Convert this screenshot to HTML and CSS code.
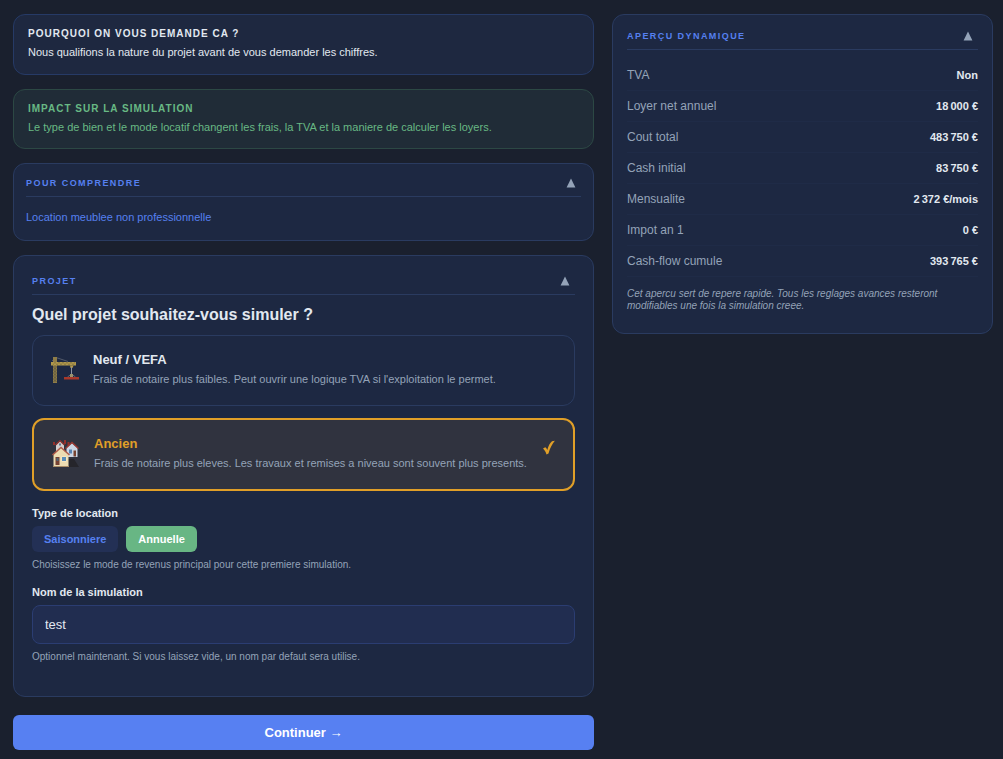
FILE: index.html
```html
<!DOCTYPE html>
<html lang="fr">
<head>
<meta charset="utf-8">
<meta name="viewport" content="width=device-width, initial-scale=1">
<title>Simulation</title>
<link rel="stylesheet" href="styles.css">
</head>
<body>
<div class="layout">
  <main class="main">
    <section class="info">
      <h2 class="info-title">POURQUOI ON VOUS DEMANDE CA ?</h2>
      <p class="info-text">Nous qualifions la nature du projet avant de vous demander les chiffres.</p>
    </section>
    <section class="info info-impact">
      <h2 class="info-title">IMPACT SUR LA SIMULATION</h2>
      <p class="info-text">Le type de bien et le mode locatif changent les frais, la TVA et la maniere de calculer les loyers.</p>
    </section>
    <section class="card card-help">
      <header class="card-head">
        <h2 class="card-title">POUR COMPRENDRE</h2>
        <button class="toggle" type="button" aria-label="Replier"><svg width="10" height="10" viewBox="0 0 10 10"><path d="M5 0.5 9.4 9.5H0.6z"/></svg></button>
      </header>
      <a class="help-link" href="#">Location meublee non professionnelle</a>
    </section>
    <section class="card card-project">
      <header class="card-head">
        <h2 class="card-title">PROJET</h2>
        <button class="toggle" type="button" aria-label="Replier"><svg width="10" height="10" viewBox="0 0 10 10"><path d="M5 0.5 9.4 9.5H0.6z"/></svg></button>
      </header>
      <h1 class="question">Quel projet souhaitez-vous simuler ?</h1>
      <div class="options">
        <button class="option" type="button" aria-pressed="false">
          <svg class="option-icon" width="28" height="28" viewBox="0 0 28 28">
            <path d="M1 5 5 1.500 17 5.500" fill="none" stroke="#5f6674" stroke-width=".8"/>
            <path d="M2 27V1h4v26z" fill="#8f7d48"/>
            <path d="M2.500 8 5.500 11 2.500 14 5.500 17 2.500 20 5.500 23 2.500 26M5.500 8 2.500 11 5.500 14 2.500 17 5.500 20 2.500 23 5.500 26" fill="none" stroke="#4a4638" stroke-width=".6"/>
            <path d="M0 6h25v3.500H0z" fill="#b0984c"/>
            <path d="m2 9 2-3 2 3 2-3 2 3 2-3 2 3 2-3 2 3 2-3 2 3 2-3" fill="none" stroke="#75663a" stroke-width=".5"/>
            <path d="M19 9.500h3.500L21.500 12h-2z" fill="#b59a45"/>
            <path d="M20.500 11v8" fill="none" stroke="#8d93a0" stroke-width="1"/>
            <path d="m20.500 18-4 3m4-3 4 3" fill="none" stroke="#7c7f86" stroke-width=".7"/>
            <path d="M19 18h3v3h-3z" fill="#9a946f"/>
            <path d="M13 21h15v2.500H13z" fill="#a9382a"/>
          </svg>
          <span class="option-body">
            <span class="option-name">Neuf / VEFA</span>
            <span class="option-desc">Frais de notaire plus faibles. Peut ouvrir une logique TVA si l'exploitation le permet.</span>
          </span>
        </button>
        <button class="option option-selected" type="button" aria-pressed="true">
          <svg class="option-icon" width="28" height="28" viewBox="0 0 28 28">
            <path d="M16 19h6l5 8H17z" fill="#25252b"/>
            <path d="M4 5 8 1l4 4v6H4z" fill="#d3cecd"/>
            <path d="M3.500 5 8 .8 12.500 5" fill="none" stroke="#8b3230" stroke-width="1.400"/>
            <path d="M1 2h2v3H1zM12 0h2v4h-2zM15.500 2h2v4h-2z" fill="#94302c"/>
            <path d="M7 3.500h2v2H7z" fill="#5f788f"/>
            <path d="M14.500 8 20 3l5.500 5v9h-11z" fill="#cbd6e4"/>
            <path d="M13.500 8.500 20 2.500 26.500 8.500" fill="none" stroke="#973832" stroke-width="1.500"/>
            <path d="M17 9.500h3v4h-3z" fill="#5684b5"/><path d="M21.500 10.500h2.500v6h-2.500z" fill="#774431"/>
            <path d="M1.500 14.500 9 8l7.500 6.500v12h-15z" fill="#ecdcb2"/>
            <path d="M.5 15 9 7.500l8.500 7.500" fill="none" stroke="#b05a48" stroke-width="1.500"/>
            <path d="M3.500 17h4v8h-4z" fill="#754233"/><path d="M4.500 18h2v3h-2z" fill="#4f6577"/>
            <path d="M9.500 16.500h5v5h-5z" fill="#fff0cf"/><path d="M10 17h4v4h-4z" fill="#598db9"/>
            <path d="M1 26h16v1H1z" fill="#a98c68"/>
          </svg>
          <span class="option-body">
            <span class="option-name">Ancien</span>
            <span class="option-desc">Frais de notaire plus eleves. Les travaux et remises a niveau sont souvent plus presents.</span>
          </span>
          <svg class="option-check" width="12" height="16" viewBox="0 0 12 16"><path d="M0 8.500 2.300 7.200Q3.500 8 4.300 10C5.500 5.500 7 2.800 9 1.200L11.900.8C9.300 3.800 7 8 5.500 13.500L3.500 14.400C2.700 11.800 1.500 10 0 8.500z"/></svg>
        </button>
      </div>
      <div class="field" role="group" aria-labelledby="type-label">
        <span class="label" id="type-label">Type de location</span>
        <div class="pills">
          <button class="pill" type="button" aria-pressed="false">Saisonniere</button>
          <button class="pill pill-active" type="button" aria-pressed="true">Annuelle</button>
        </div>
        <p class="hint">Choisissez le mode de revenus principal pour cette premiere simulation.</p>
      </div>
      <div class="field">
        <label class="label" for="sim-name">Nom de la simulation</label>
        <input class="input" id="sim-name" type="text" value="test">
        <p class="hint">Optionnel maintenant. Si vous laissez vide, un nom par defaut sera utilise.</p>
      </div>
    </section>
    <button class="submit" type="button">Continuer →</button>
  </main>
  <aside class="card preview">
    <header class="card-head">
      <h2 class="card-title">APERÇU DYNAMIQUE</h2>
      <button class="toggle" type="button" aria-label="Replier"><svg width="10" height="10" viewBox="0 0 10 10"><path d="M5 0.5 9.4 9.5H0.6z"/></svg></button>
    </header>
    <dl class="stats">
      <div class="stat"><dt>TVA</dt><dd>Non</dd></div>
      <div class="stat"><dt>Loyer net annuel</dt><dd>18&#8239;000&nbsp;€</dd></div>
      <div class="stat"><dt>Cout total</dt><dd>483&#8239;750&nbsp;€</dd></div>
      <div class="stat"><dt>Cash initial</dt><dd>83&#8239;750&nbsp;€</dd></div>
      <div class="stat"><dt>Mensualite</dt><dd>2&#8239;372&nbsp;€/mois</dd></div>
      <div class="stat"><dt>Impot an 1</dt><dd>0&nbsp;€</dd></div>
      <div class="stat"><dt>Cash-flow cumule</dt><dd>393&#8239;765&nbsp;€</dd></div>
    </dl>
    <p class="note">Cet apercu sert de repere rapide. Tous les reglages avances resteront modifiables une fois la simulation creee.</p>
  </aside>
</div>
</body>
</html>
```
FILE: styles.css
```css
* { box-sizing: border-box; }

body {
  margin: 0;
  background: #1a202e;
  color: #e2e8f0;
  font-family: "Liberation Sans", Arial, sans-serif;
  font-size: 11px;
}

h1, h2, p, dl, dd { margin: 0; }
button, input { font-family: inherit; }
button { cursor: pointer; }

.layout {
  display: grid;
  grid-template-columns: 61fr 40fr;
  gap: 18px;
  align-items: start;
  padding: 14px 10px 9px 13px;
}

.main { display: flex; flex-direction: column; gap: 14px; }

.info {
  padding: 11px 14px 13px;
  background: #1e2840;
  border: 1px solid #263a66;
  border-radius: 12px;
}
.info-title {
  margin-bottom: 1px;
  font-size: 10px;
  line-height: 16px;
  letter-spacing: 1px;
}
.info-text { line-height: 18px; }
.info-impact {
  padding-bottom: 12px;
  background: #202c37;
  border-color: #2c4844;
  color: #68b984;
}

.card {
  background: #1d2842;
  border: 1px solid #2a3b60;
  border-radius: 12px;
}
.card-head {
  display: flex;
  justify-content: space-between;
  align-items: center;
  padding-bottom: 6px;
  border-bottom: 1px solid #2a3b60;
}
.card-title {
  color: #5680f0;
  font-size: 9px;
  line-height: 14px;
  letter-spacing: 0.16em;
}
.toggle {
  display: flex;
  padding: 0 5px;
  background: none;
  border: 0;
  fill: #94a3b8;
}

.card-help { padding: 12px 12px 15px; }
.help-link {
  display: block;
  margin-top: 12px;
  color: #5680f0;
  line-height: 16px;
  text-decoration: none;
}

.card-project { padding: 18px 18px 31px; }
.question {
  margin: 10px 0;
  font-size: 16px;
  line-height: 20px;
}

.options { display: flex; flex-direction: column; gap: 12px; margin-bottom: 14px; }
.option {
  display: flex;
  align-items: center;
  gap: 14px;
  padding: 14px 18px 16px;
  background: #1d2842;
  border: 1px solid #2a3b60;
  border-radius: 12px;
  color: #e2e8f0;
  text-align: left;
}
.option-selected {
  background: #30333f;
  border: 2px solid #e09f28;
}
.option-icon { flex: none; overflow: visible; }
.option-body { flex: 1; display: flex; flex-direction: column; }
.option-name { font-size: 13px; font-weight: bold; line-height: 20px; }
.option-selected .option-name { color: #e09f28; }
.option-desc { color: #94a3b8; font-size: 11px; line-height: 19px; }
.option-check { flex: none; align-self: flex-start; margin-top: 6px; fill: #e09f28; }

.field { display: flex; flex-direction: column; gap: 5px; }
.field + .field { margin-top: 11px; }
.label { font-weight: bold; line-height: 16px; }
.hint { color: #94a3b8; font-size: 10px; line-height: 16px; }
.pills { display: flex; gap: 8px; }
.pill {
  padding: 5px 12px;
  background: #233055;
  border: 0;
  border-radius: 6px;
  color: #5680f0;
  font-size: 11px;
  font-weight: bold;
  line-height: 16px;
}
.pill-active { background: #68b684; color: #fff; }
.input {
  width: 100%;
  padding: 10px 12px;
  background: #212d50;
  border: 1px solid #2b3d72;
  border-radius: 8px;
  color: #e2e8f0;
  font-size: 13px;
  line-height: 17px;
}

.submit {
  margin-top: 4px;
  padding: 8px;
  background: #5780f2;
  border: 0;
  border-radius: 6px;
  color: #fff;
  font-size: 13px;
  font-weight: bold;
  line-height: 19px;
}

.preview { padding: 14px 14px 21px; }
.stats { margin-top: 10px; }
.stat {
  display: flex;
  justify-content: space-between;
  border-bottom: 1px solid #1f2b47;
  font-size: 12px;
  line-height: 30px;
}
.stat dt { color: #94a3b8; }
.stat dd { font-size: 11px; font-weight: bold; }
.note {
  margin-top: 11px;
  color: #94a3b8;
  font-size: 10px;
  font-style: italic;
  line-height: 12px;
}
```
